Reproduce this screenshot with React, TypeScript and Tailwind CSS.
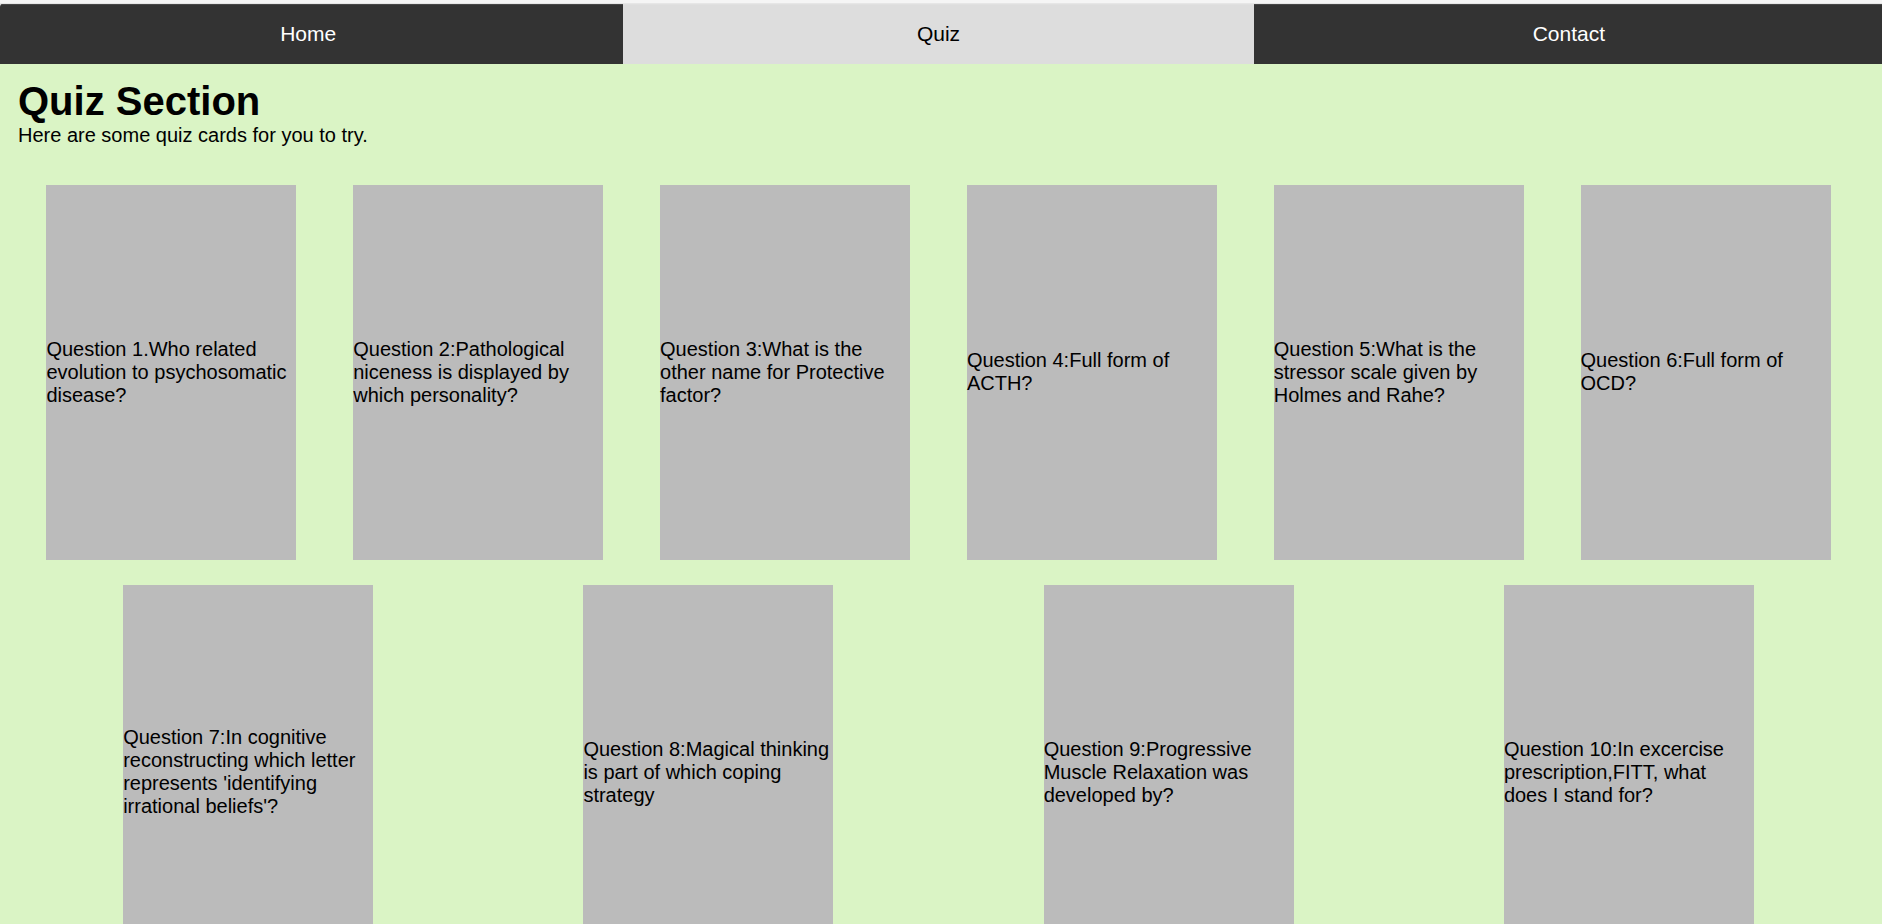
const links = [
  { label: "Home", active: false },
  { label: "Quiz", active: true },
  { label: "Contact", active: false },
];

const rows = [
  [
    "Question 1.Who related evolution to psychosomatic disease?",
    "Question 2:Pathological niceness is displayed by which personality?",
    "Question 3:What is the other name for Protective factor?",
    "Question 4:Full form of ACTH?",
    "Question 5:What is the stressor scale given by Holmes and Rahe?",
    "Question 6:Full form of OCD?",
  ],
  [
    "Question 7:In cognitive reconstructing which letter represents 'identifying irrational beliefs'?",
    "Question 8:Magical thinking is part of which coping strategy",
    "Question 9:Progressive Muscle Relaxation was developed by?",
    "Question 10:In excercise prescription,FITT, what does I stand for?",
  ],
];

function NavBar() {
  return (
    <header className="bg-[#f5f5f5]">
      <div className="h-1 border-b border-[#e6e6e6]" />
      <div className="overflow-hidden rounded-tl-[3px]">
        <nav className="-ml-[7px] -mr-[2px] flex h-[60px]">
          {links.map(({ label, active }) => (
            <a
              key={label}
              href={`#${label.toLowerCase()}`}
              aria-current={active ? "page" : undefined}
              className={
                active
                  ? "flex flex-1 items-center justify-center border-t border-[#e0e0e0] bg-[#dddddd] pb-0.5 text-[21px] leading-6 text-black"
                  : "flex flex-1 items-center justify-center border-t border-[#474747] bg-[#333333] pb-0.5 text-[21px] leading-6 text-white"
              }
            >
              {label}
            </a>
          ))}
        </nav>
      </div>
    </header>
  );
}

function QuizCard({ question }: { question: string }) {
  return (
    <article className="flex h-[375px] w-[250px] items-center bg-[#bbbbbb] pb-px">
      <p>{question}</p>
    </article>
  );
}

export default function App() {
  return (
    <div className="min-h-screen bg-[#daf4c5] font-['Liberation_Sans',Arial,sans-serif] text-[20px] leading-[23px] text-black">
      <NavBar />
      <main className="px-[18px] pt-[14px] pb-[25px]">
        <h1 className="text-[40px] leading-[46px] font-bold">Quiz Section</h1>
        <p>Here are some quiz cards for you to try.</p>
        <div className="mr-[5px] mt-[38px] flex flex-col gap-[25px]">
          {rows.map((row, index) => (
            <section key={index} className="flex flex-wrap justify-around gap-y-[25px]">
              {row.map((question) => (
                <QuizCard key={question} question={question} />
              ))}
            </section>
          ))}
        </div>
      </main>
    </div>
  );
}
